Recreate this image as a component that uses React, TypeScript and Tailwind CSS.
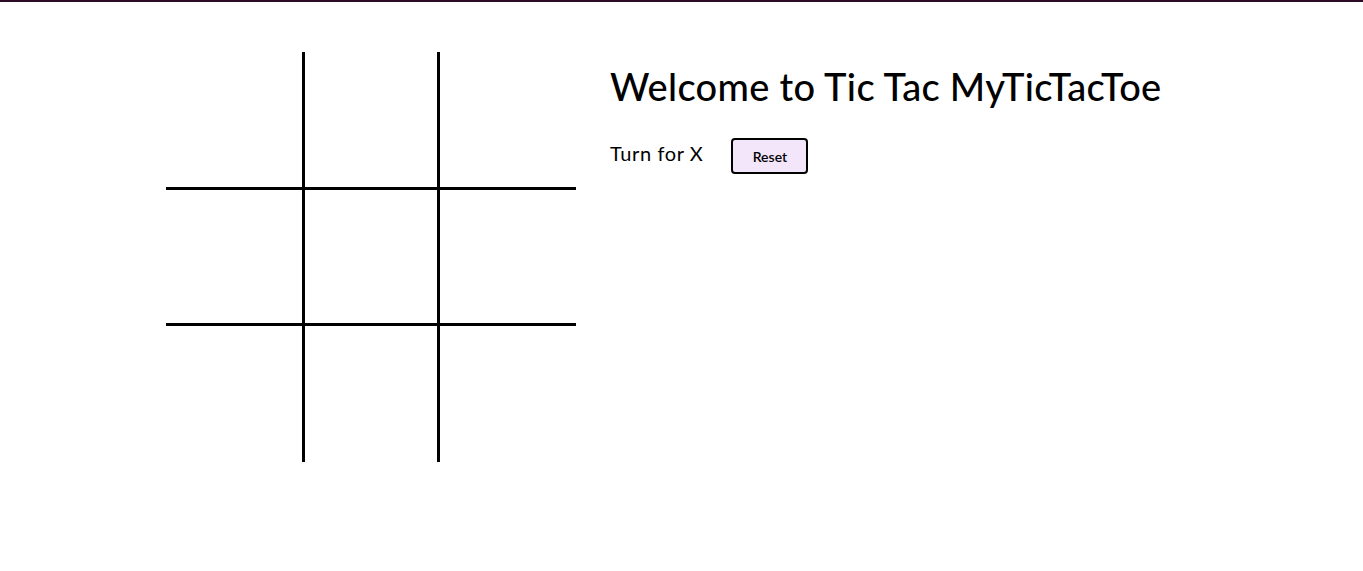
const cells = Array.from({ length: 9 }, (_, i) => i);

const colW = ['w-[139px]', 'w-[135px]', 'w-[136px]'];
const rowH = ['h-[138px]', 'h-[136px]', 'h-[136px]'];

export default function App() {
  return (
    <div className="min-h-[571px] bg-white border-t-2 border-[#2b0b26] font-['Lato',sans-serif] text-black">
      <div className="flex pl-[166px] pt-[50px] gap-[34px]">
        <div className="grid grid-cols-[139px_135px_136px] w-[410px]">
          {cells.map((i) => {
            const r = Math.floor(i / 3);
            const c = i % 3;
            return (
              <div
                key={i}
                className={[
                  colW[c],
                  rowH[r],
                  c < 2 ? 'border-r-[3px]' : '',
                  r < 2 ? 'border-b-[3px]' : '',
                  'border-black box-border',
                ].join(' ')}
              />
            );
          })}
        </div>
        <div className="pt-[10px]">
          <h1 className="text-[38px] font-medium leading-[48px] tracking-[0.3px]">
            Welcome to Tic Tac MyTicTacToe
          </h1>
          <div className="flex items-center gap-[28px] mt-[22px]">
            <span className="text-[20px] font-normal leading-[28px] tracking-[0.6px]">Turn for X</span>
            <button className="w-[77px] h-[36px] mt-[6px] rounded-[4px] border-2 border-black bg-[#f3e6fa] text-[14px] font-semibold">
              Reset
            </button>
          </div>
        </div>
      </div>
    </div>
  );
}
